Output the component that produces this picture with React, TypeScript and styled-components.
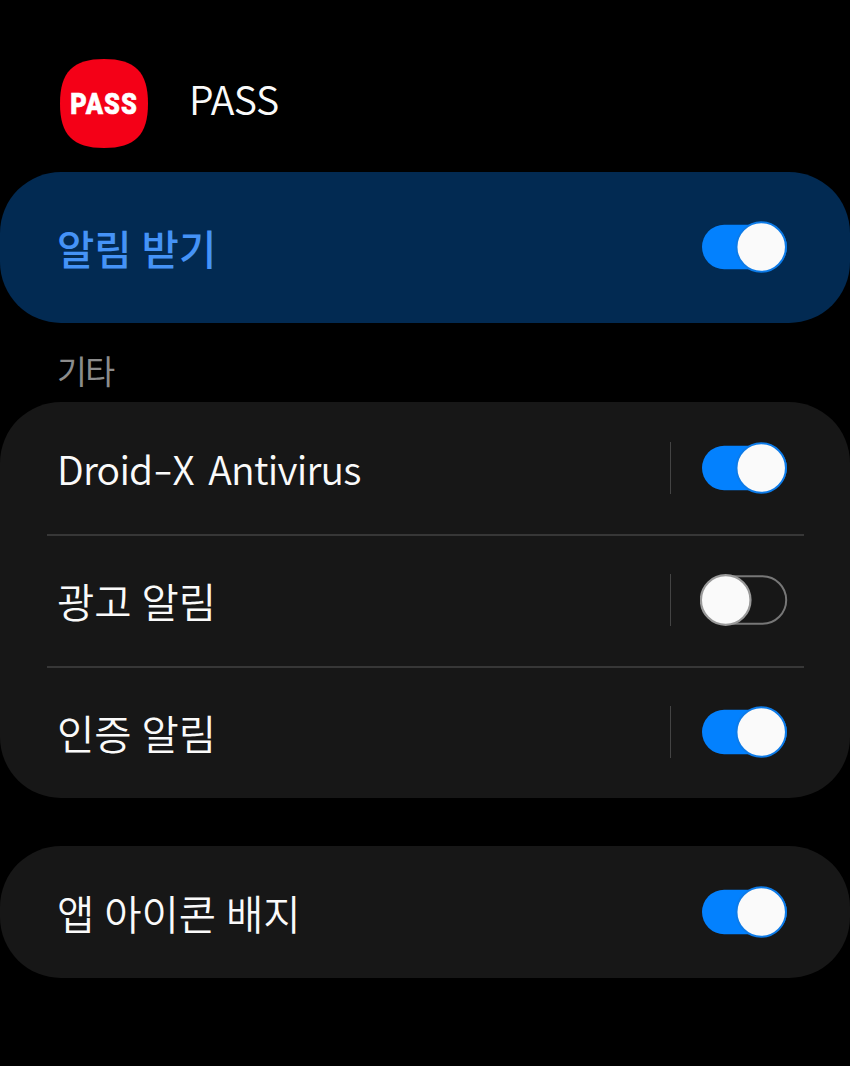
import React, { useState } from "react";
import styled, { createGlobalStyle } from "styled-components";

const GlobalStyle = createGlobalStyle`
  * { box-sizing: border-box; }
  body {
    margin: 0;
    background: #000;
    color: #fafafa;
    font-family: "Noto Sans CJK KR", "Noto Sans", sans-serif;
  }
`;

const Screen = styled.main`
  width: 850px;
  height: 1066px;
  overflow: hidden;
  background: #000;
`;

const Header = styled.header`
  height: 172px;
  padding: 59px 60px 0;
  display: flex;
  align-items: flex-start;
`;

const Title = styled.h1`
  margin: 9px 0 0 40px;
  font-size: 39.3px;
  line-height: 60px;
  font-weight: 350;
  letter-spacing: -0.6px;
`;

const Card = styled.section<{ $accent?: boolean }>`
  border-radius: 61px;
  background: ${(p) => (p.$accent ? "#022a52" : "#171717")};
`;

const SectionLabel = styled.h2`
  margin: 0;
  height: 79px;
  padding: 22px 57px 0;
  font-size: 32.5px;
  line-height: 50px;
  font-weight: 400;
  letter-spacing: -1.6px;
  color: #8c8c8c;
`;

const Row = styled.div<{ $height: number }>`
  height: ${(p) => p.$height}px;
  padding: 0 62px 1px 57px;
  display: flex;
  align-items: center;
`;

const Label = styled.span<{ $accent?: boolean; $latin?: boolean }>`
  flex: 1;
  padding-top: ${(p) => (p.$latin ? 0 : 2)}px;
  font-size: ${(p) => (p.$latin ? 39.2 : 40.6)}px;
  line-height: 60px;
  white-space: pre;
  letter-spacing: ${(p) => (p.$latin ? -0.8 : 0)}px;
  word-spacing: ${(p) => (p.$latin ? 6.5 : 0.8)}px;
  font-weight: ${(p) => (p.$accent ? 500 : 350)};
  color: ${(p) => (p.$accent ? "#4593f7" : "#fafafa")};
`;

const Hyphen = styled.span`
  display: inline-block;
  margin: 0 4px 0 3.5px;
  transform: translateY(-1px) scaleX(1.45);
`;

const Separator = styled.span`
  width: 1px;
  height: 52px;
  margin-right: 29px;
  background: #444;
`;

const Divider = styled.hr`
  height: 2px;
  margin: 0 46px -2px 47px;
  border: 0;
  background: #373737;
`;

const SwitchButton = styled.button`
  width: 88px;
  height: 52px;
  padding: 0;
  border: 0;
  background: none;
  svg { display: block; }
`;

const Gap = styled.div`
  height: 48px;
`;

function Toggle({ initial, label }: { initial: boolean; label: string }) {
  const [on, setOn] = useState(initial);
  return (
    <SwitchButton role="switch" aria-checked={on} aria-label={label} onClick={() => setOn(!on)}>
      <svg width="88" height="52" viewBox="0 0 88 52">
        {on ? (
          <>
            <rect x="2" y="3.8" width="85" height="44.4" rx="22.2" fill="#0381fe" />
            <circle cx="61.2" cy="26" r="24.7" fill="#fafafa" stroke="#0d7be8" strokeWidth="1.9" />
          </>
        ) : (
          <>
            <rect x="3" y="2.3" width="83.2" height="47.4" rx="23.7" fill="none" stroke="#777" strokeWidth="2" />
            <circle cx="25.7" cy="26" r="24.8" fill="#fafafa" stroke="#999" strokeWidth="2.2" />
          </>
        )}
      </svg>
    </SwitchButton>
  );
}

function PassIcon() {
  return (
    <svg width="89" height="90" viewBox="0 0 89 90" aria-label="PASS">
      <path d="M44 0C75 0 88 13 88 44.5S75 89 44 89S0 76 0 44.5S13 0 44 0Z" fill="#f40017" />
      <text x="10.3" y="55" textLength="67.5" lengthAdjust="spacingAndGlyphs" letterSpacing="1.2" fontFamily="Roboto, sans-serif" fontWeight="900" fontSize="29.5" fill="#fff" stroke="#fff" strokeWidth="0.6">PASS</text>
    </svg>
  );
}

const channels = [
  { name: "Droid-X Antivirus", on: true, latin: true },
  { name: "광고 알림", on: false, latin: false },
  { name: "인증 알림", on: true, latin: false },
];

function ChannelName({ name }: { name: string }) {
  const [head, tail] = name.split("-");
  return tail ? (
    <>
      {head}
      <Hyphen>-</Hyphen>
      {tail}
    </>
  ) : (
    <>{name}</>
  );
}

export default function App() {
  return (
    <Screen>
      <GlobalStyle />
      <Header>
        <PassIcon />
        <Title>PASS</Title>
      </Header>
      <Card $accent>
        <Row $height={151}>
          <Label $accent>알림 받기</Label>
          <Toggle initial label="알림 받기" />
        </Row>
      </Card>
      <SectionLabel>기타</SectionLabel>
      <Card>
        {channels.map((c, i) => (
          <React.Fragment key={c.name}>
            {i > 0 && <Divider />}
            <Row $height={132}>
              <Label $latin={c.latin}>
                <ChannelName name={c.name} />
              </Label>
              <Separator />
              <Toggle initial={c.on} label={c.name} />
            </Row>
          </React.Fragment>
        ))}
      </Card>
      <Gap />
      <Card>
        <Row $height={132}>
          <Label>앱 아이콘 배지</Label>
          <Toggle initial label="앱 아이콘 배지" />
        </Row>
      </Card>
    </Screen>
  );
}
